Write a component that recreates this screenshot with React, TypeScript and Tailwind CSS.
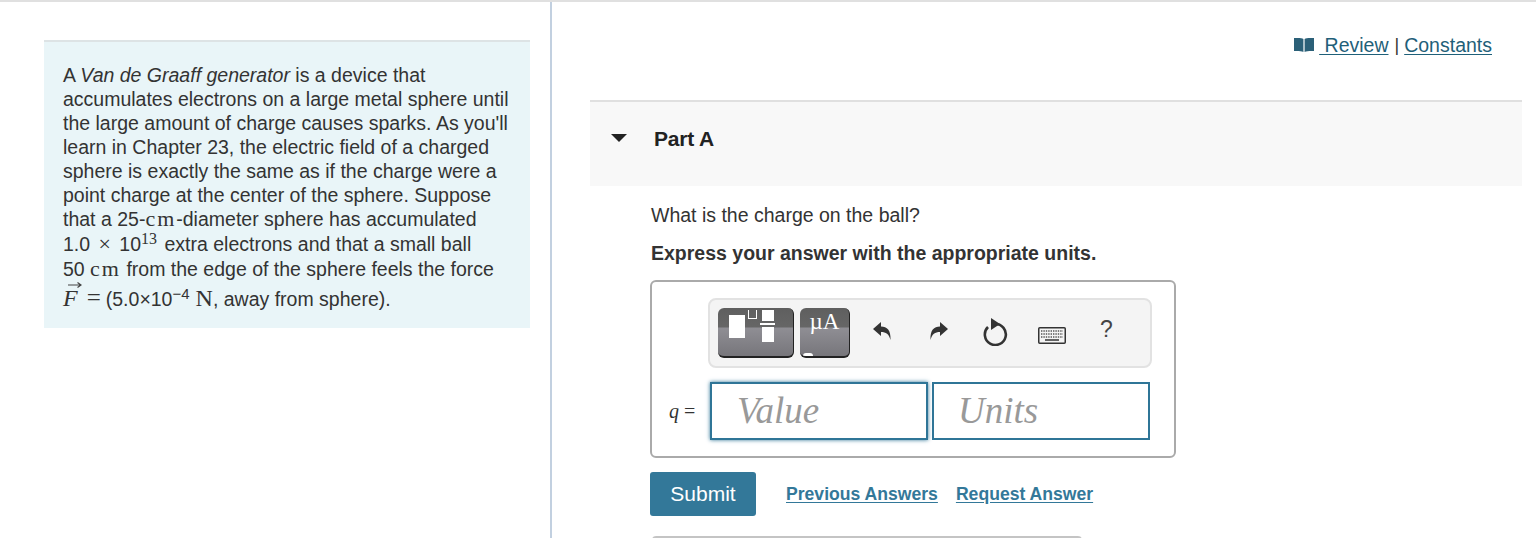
const serif = "font-['Liberation_Serif',serif]";
const btnFace =
  "relative h-[50px] rounded-md overflow-hidden border-b-2 border-r border-[#222] bg-[linear-gradient(#5f5f5f_0,#666_19px,#8f8e94_20px,#77767b_100%)]";

function TemplateButton() {
  return (
    <div className={`${btnFace} w-[76px]`}>
      <div className="absolute left-[11px] top-[7px] w-[16px] h-[23px] bg-white" />
      <div className="absolute left-[30px] top-[2px] w-[9px] h-[9px] border border-t-0 border-white" />
      <div className="absolute left-[44px] top-[2px] w-[12px] h-[11px] bg-white" />
      <div className="absolute left-[42px] top-[15px] w-[15px] h-[2px] bg-white" />
      <div className="absolute left-[44px] top-[19px] w-[12px] h-[15px] bg-white" />
    </div>
  );
}

function UnitsButton() {
  return (
    <div className={`${btnFace} w-[50px] text-white text-[23px] leading-none text-center pt-[2px] ${serif}`}>
      µA
      <div className="absolute left-[3px] bottom-0 w-[10px] h-[3px] rounded-t-full bg-white" />
    </div>
  );
}

function ArrowIcon({ flip }: { flip?: boolean }) {
  return (
    <svg width="20" height="24" viewBox="0 0 20 24" className={flip ? "-scale-x-100" : ""}>
      <path d="M1 10 L9 3 V7.5 C15 7.5 19 11 18.5 21 C17 15 14 13 9 13 V17 Z" fill="#333" />
    </svg>
  );
}

function KeyboardIcon() {
  return (
    <svg width="28" height="17" viewBox="0 0 28 17">
      <rect x="0.75" y="0.75" width="26.5" height="15.5" rx="1" fill="#f4f4f4" stroke="#333" strokeWidth="1.5" />
      <path d="M3 4 H25 M3 7 H25 M3 10 H25" stroke="#555" strokeWidth="1.4" strokeDasharray="1.4 1" />
      <path d="M7 13 H21" stroke="#333" strokeWidth="1.5" />
    </svg>
  );
}

export default function App() {
  return (
    <div className="w-[1536px] h-[538px] overflow-hidden bg-white border-t-2 border-[#e0e0e0] flex font-['Liberation_Sans',sans-serif] text-[#333]">
      <div className="w-[552px] shrink-0 border-r-2 border-[#c2d0e0] pt-[38px] pl-[44px] pr-[20px]">
        <div className="bg-[#e9f5f8] border-t-2 border-[#dde3e5] h-[288px] pl-[19px] pt-[21px] text-[19.5px] leading-[24px] whitespace-nowrap">
          A <i>Van de Graaff generator</i> is a device that<br />
          accumulates electrons on a large metal sphere until<br />
          the large amount of charge causes sparks. As you'll<br />
          learn in Chapter 23, the electric field of a charged<br />
          sphere is exactly the same as if the charge were a<br />
          point charge at the center of the sphere. Suppose<br />
          that a 25-<span className={`text-[22px] tracking-[2px] ${serif}`}>cm</span>-diameter sphere has accumulated
          <div className="h-[25px] mt-[1px]">
            1.0 <span className={`text-[22px] mx-[3px] ${serif}`}>×</span> 10<sup className={`text-[16px] relative -top-[7px] align-baseline mr-[2px] ${serif}`}>13</sup> extra electrons and that a small ball
          </div>
          <div className="h-[25px]">
            50 <span className={`text-[22px] tracking-[2px] ${serif}`}>cm</span> from the edge of the sphere feels the force
          </div>
          <div className="mt-[4px] relative">
            <span className={`italic text-[24px] ${serif}`}>F</span>
            <svg width="14" height="6" viewBox="0 0 14 6" className="absolute left-[5px] -top-[4px]">
              <path d="M0 3 H12 M9.5 0.5 L13 3 L9.5 5.5" fill="none" stroke="#444" strokeWidth="1.2" />
            </svg>
            <span className={`ml-[9px] mr-[5px] text-[25px] ${serif}`}>=</span>(5.0×10<sup className="text-[15px] relative -top-[7px] align-baseline mr-[6px]">−4</sup><span className={`text-[24px] ${serif}`}>N</span>, away from sphere).
          </div>
        </div>
      </div>

      <div className="flex-1 min-w-0 pl-[38px] pr-[14px]">
        <div className="h-[98px] pt-[31px] pr-[30px] flex justify-end items-start text-[19.5px] leading-[24px]">
          <svg width="20" height="14" viewBox="0 0 20 14" className="mt-[5px] mr-[5px]">
            <path d="M0 0 H4 C6 0 8.5 0 9.4 1 V14 C8 13 5 13 3 13 H0 Z M20 0 H16 C14 0 11.5 0 10.6 1 V14 C12 13 15 13 17 13 H20 Z" fill="#2b6078" />
          </svg>
          <span className="text-[#1f6079] underline underline-offset-2 whitespace-pre"> Review</span>
          <span className="ml-[6px] mr-[5px] text-[18px]">|</span>
          <span className="text-[#1f6079] underline underline-offset-2">Constants</span>
        </div>

        <div className="h-[86px] bg-[#f8f8f8] border-t-2 border-[#e0e0e0] flex items-start pt-[25px] pl-[21px]">
          <div className="mt-[7px] w-0 h-0 border-l-[8px] border-r-[8px] border-t-[8px] border-l-transparent border-r-transparent border-t-[#222]" />
          <div className="ml-[27px] text-[21px] leading-[24px] font-bold text-[#222] tracking-[-0.2px]">Part A</div>
        </div>

        <div className="pl-[61px] pt-[17px] text-[19.5px] leading-[24px]">
          <p>What is the charge on the ball?</p>
          <p className="mt-[14px] font-bold">Express your answer with the appropriate units.</p>

          <div className="mt-[15px] -ml-[1px] w-[526px] h-[178px] rounded-md border-2 border-[#aaa] pt-[16px] pl-[56px]">
            <div className="w-[444px] h-[70px] rounded-lg bg-[#f4f4f4] border-2 border-[#e2e2e2] flex items-center pl-[8px]">
              <TemplateButton />
              <div className="w-[6px]" />
              <UnitsButton />
              <div className="ml-[21px] w-[22px] flex justify-center -mt-[5px]"><ArrowIcon /></div>
              <div className="ml-[35px] w-[22px] flex justify-center -mt-[5px]"><ArrowIcon flip /></div>
              <svg width="28" height="28" viewBox="0 0 28 28" className="ml-[31px] -mt-[3px]" fill="none" stroke="#333" strokeWidth="2.6">
                <path d="M7 9 A10.5 10.5 0 1 0 14 6" />
                <path d="M10 0 L19 6 L10 12 Z" fill="#333" stroke="none" />
              </svg>
              <div className="ml-[29px] mt-[4px]"><KeyboardIcon /></div>
              <div className="ml-[34px] w-[14px] text-[23px] text-[#444] -mt-[9px]">?</div>
            </div>
            <div className="mt-[14px] flex items-center -ml-[39px]">
              <div className={`w-[41px] text-[20px] whitespace-nowrap ${serif}`}><i>q</i> =</div>
              <div className={`w-[218px] h-[58px] border-2 border-[#2f7597] shadow-[0_0_4px_#2f7597] flex items-center pl-[25px] italic text-[37px] text-[#999] ${serif}`}>Value</div>
              <div className={`ml-[4px] w-[218px] h-[58px] border-2 border-[#2f7597] flex items-center pl-[24px] italic text-[37px] text-[#999] ${serif}`}>Units</div>
            </div>
          </div>

          <div className="mt-[14px] -ml-[1px] flex items-center">
            <div className="w-[106px] h-[44px] rounded-[3px] bg-[#337899] text-white flex items-center justify-center text-[21px]">Submit</div>
            <span className="ml-[30px] text-[17.6px] font-bold text-[#337899] underline underline-offset-2">Previous Answers</span>
            <span className="ml-[18px] text-[17.6px] font-bold text-[#337899] underline underline-offset-2">Request Answer</span>
          </div>
          <div className="mt-[20px] ml-[1px] w-[430px] h-[4px] rounded-t-md bg-[#c4c4c4]" />
        </div>
      </div>
    </div>
  );
}
